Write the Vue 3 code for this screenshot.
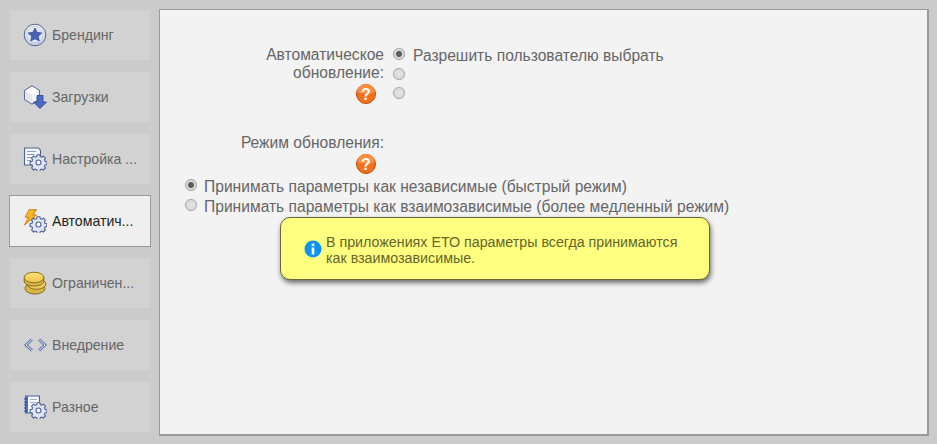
<template>
  <div class="page">
    <nav class="side">
      <button v-for="item in items" :key="item.label" class="tab" :class="{ active: item.active }">
        <svg class="tab-icon" width="24" height="24" viewBox="0 0 24 24">
          <defs>
            <linearGradient id="starBg" x1="0" y1="0" x2="0" y2="1">
              <stop offset="0" stop-color="#f3f5fa" />
              <stop offset="1" stop-color="#c3cbdf" />
            </linearGradient>
            <linearGradient id="coinTop" x1="0" y1="0" x2="0" y2="1">
              <stop offset="0" stop-color="#fbe27a" />
              <stop offset="1" stop-color="#edc24a" />
            </linearGradient>
          </defs>
          <template v-if="item.icon === 'star'">
            <circle cx="12" cy="12" r="10.800" fill="url(#starBg)" stroke="#56678f" stroke-width="1" />
            <circle cx="12" cy="11.500" r="8.200" fill="#e4e8f2" stroke="#b4bed6" stroke-width=".6" />
            <path d="M12 5l2.100 4.300 4.700.7-3.400 3.300.8 4.700-4.200-2.200-4.200 2.200.8-4.700L5.200 10l4.700-.7z" fill="#4a64b4" stroke="#2f4596" stroke-width=".7" />
          </template>
          <template v-else-if="item.icon === 'download'">
            <path d="M1.500 5.500L9 1l7.500 4.500v9L9 19l-7.500-4.500z" fill="#f4f4f6" stroke="#5c6d9f" stroke-width="1.100" />
            <path d="M2 5.800L9 10l7-4.200L9 1.600z" fill="#fff" />
            <path d="M9 10v8.500L2 14.200V5.800z" fill="#e6e6ea" />
            <path d="M14 10.500h6v6.500h3.500L17 23.500 10.500 17H14z" fill="#4a6cc0" stroke="#2c4a9a" stroke-width=".9" />
          </template>
          <template v-else-if="item.icon === 'coins'">
            <ellipse cx="12" cy="17.500" rx="10" ry="5.500" fill="#d9b548" stroke="#8a6d1c" />
            <ellipse cx="13.500" cy="13" rx="9.500" ry="5.300" fill="#e9ca5e" stroke="#8a6d1c" />
            <path d="M1.200 6.500v3.500C1.200 13 5.500 15 11 15s9.800-2 9.800-5V6.500z" fill="#d9b548" stroke="#8a6d1c" />
            <ellipse cx="11" cy="6.500" rx="9.800" ry="5.300" fill="url(#coinTop)" stroke="#8a6d1c" />
          </template>
          <template v-else-if="item.icon === 'code'">
            <path d="M9 6.500L3 12l6 5.500M16 6.500l6 5.500-6 5.500" fill="none" stroke="#5f74ad" stroke-width="2.800" />
            <path d="M9 6.500L3 12l6 5.500M16 6.500l6 5.500-6 5.500" fill="none" stroke="#e6eaf6" stroke-width="1" />
          </template>
          <template v-else>
            <template v-if="item.icon === 'doc'">
              <path d="M1.500 1h14l2 2.500V18h-16z" fill="#f5f6fa" stroke="#4e628f" stroke-width="1.100" />
              <path d="M4 4.500h9M4 7.500h8M4 10.500h5M4 13.500h4" stroke="#8b9ac0" stroke-width="1" />
            </template>
            <template v-else-if="item.icon === 'bolt'">
              <path d="M6 .7h7.500L9.800 6h3.700L1.500 16l4-7.800H2.300z" fill="#f7b91f" stroke="#c8701a" stroke-width=".9" />
            </template>
            <template v-else>
              <path d="M2.500 1h14v17h-14z" fill="#f6f7fb" stroke="#3f5fb0" stroke-width="1.100" />
              <path d="M2.500 1h2.500v17H2.500z" fill="#5674c4" />
              <path d="M1 4h3.500M1 7h3.500M1 10h3.500M1 13h3.500M1 16h3.500" stroke="#2e4c9c" stroke-width="1" />
              <path d="M7 4.500h7M7 7.500h6" stroke="#a3b0d0" stroke-width="1" />
            </template>
            <g transform="translate(15.500 15.500)">
              <path d="M-1.400-7.800h2.800l.4 1.900 1.400.6 1.700-1 2 2-1 1.700.6 1.400 1.900.4v2.800l-1.900.4-.6 1.400 1 1.700-2 2-1.700-1-1.400.6-.4 1.900h-2.800l-.4-1.900-1.400-.6-1.700 1-2-2 1-1.700-.6-1.400-1.900-.4v-2.800l1.900-.4.6-1.400-1-1.700 2-2 1.700 1 1.400-.6z" fill="#dfe4f0" stroke="#4d6294" stroke-width="1.100" />
              <circle r="2.500" fill="#f6f7fb" stroke="#4d6294" stroke-width="1.100" />
            </g>
          </template>
        </svg>
        <span class="tab-label">{{ item.label }}</span>
      </button>
    </nav>

    <main class="panel">
      <section class="auto-row">
        <div class="field-label">
          <div>Автоматическое обновление:</div>
          <svg class="help" width="20" height="20" viewBox="0 0 20 20">
            <circle cx="10" cy="10" r="9.500" fill="#f5701a" stroke="#b8500c" />
            <path d="M1.500 8a8.500 8 0 0 1 17 0c-3 2-14 2-17 0z" fill="#ff8d3e" />
            <text x="10" y="15.500" class="help-mark">?</text>
          </svg>
        </div>
        <div class="auto-options">
          <label v-for="opt in autoOptions" :key="opt.id" class="radio-row">
            <span class="radio" :class="{ on: opt.on }"></span>
            <span class="radio-text">{{ opt.text }}</span>
          </label>
        </div>
      </section>

      <section class="mode">
        <div class="field-label mode-label">
          <div>Режим обновления:</div>
          <svg class="help" width="20" height="20" viewBox="0 0 20 20">
            <circle cx="10" cy="10" r="9.500" fill="#f5701a" stroke="#b8500c" />
            <path d="M1.500 8a8.500 8 0 0 1 17 0c-3 2-14 2-17 0z" fill="#ff8d3e" />
            <text x="10" y="15.500" class="help-mark">?</text>
          </svg>
        </div>
        <label v-for="opt in modeOptions" :key="opt.text" class="radio-row wide">
          <span class="radio" :class="{ on: opt.on }"></span>
          <span class="radio-text">{{ opt.text }}</span>
        </label>
      </section>

      <div class="note">
        <svg class="note-icon" width="18" height="18" viewBox="0 0 18 18">
          <circle cx="9" cy="9" r="8.500" fill="#0c93f5" />
          <rect x="7.700" y="7.500" width="2.600" height="7" fill="#fff" />
          <rect x="7.700" y="3.500" width="2.600" height="2.600" fill="#fff" />
        </svg>
        <p>В приложениях ЕТО параметры всегда принимаются как взаимозависимые.</p>
      </div>
    </main>
  </div>
</template>

<script setup>
const items = [
  { label: "Брендинг", icon: "star" },
  { label: "Загрузки", icon: "download" },
  { label: "Настройка ...", icon: "doc" },
  { label: "Автоматич...", icon: "bolt", active: true },
  { label: "Ограничен...", icon: "coins" },
  { label: "Внедрение", icon: "code" },
  { label: "Разное", icon: "book" },
];
const autoOptions = [
  { id: 1, text: "Разрешить пользователю выбрать", on: true },
  { id: 2, text: "" },
  { id: 3, text: "" },
];
const modeOptions = [
  { text: "Принимать параметры как независимые (быстрый режим)", on: true },
  { text: "Принимать параметры как взаимозависимые (более медленный режим)" },
];
</script>

<style>
html,
body {
  background: #cbcbcb;
}
</style>

<style scoped>
.page {
  display: flex;
  width: 937px;
  height: 444px;
  box-sizing: border-box;
  padding: 9px 8px 8px 9px;
  background: #cbcbcb;
  font-family: "Liberation Sans", Arial, sans-serif;
  color: #666;
  overflow: hidden;
}
.side {
  display: flex;
  flex-direction: column;
  width: 142px;
  margin-right: 8px;
}
.tab {
  flex: none;
  display: flex;
  align-items: center;
  width: 142px;
  height: 52px;
  margin-bottom: 10px;
  padding: 0 0 0 13px;
  box-sizing: border-box;
  border: 1px solid transparent;
  background: #d2d2d2;
  background-clip: padding-box;
  font: inherit;
  font-size: 14.1px;
  color: #666;
  text-align: left;
}
.tab.active {
  border-color: #999;
  background: #efefef;
  color: #222;
}
.tab-icon {
  flex: none;
  margin-right: 5px;
}
.tab-label {
  white-space: nowrap;
}
.panel {
  flex: 1;
  box-sizing: border-box;
  height: 427px;
  padding: 36px 25px 0;
  background: #f3f3f3;
  border: 2px solid #999;
  border-width: 1px 2px 2px 1px;
  font-size: 15.6px;
}
.auto-row {
  display: flex;
}
.field-label {
  width: 199px;
  padding-left: 60px;
  box-sizing: border-box;
  text-align: right;
  line-height: 18px;
}
.help {
  display: block;
  margin: 2px 8px 0 auto;
}
.help-mark {
  fill: #fff;
  font-size: 16px;
  font-weight: 700;
  text-anchor: middle;
  font-family: "Liberation Sans", sans-serif;
}
.auto-options {
  margin-left: 9px;
}
.radio-row {
  display: flex;
  align-items: center;
  height: 19.5px;
  white-space: nowrap;
}
.radio-row.wide {
  height: 20px;
}
.radio {
  flex: none;
  width: 12px;
  height: 12px;
  margin: -3px 8px 0 0;
  box-sizing: border-box;
  border: 1px solid #aaa;
  border-radius: 50%;
  background: radial-gradient(circle, #e4e4e4, #d4d4d4);
  box-shadow: 0 0 1px #bbb;
}
.radio.on {
  background: radial-gradient(circle, #5c5c5c 0 2.500px, #d8d8d8 3.500px);
}
.radio-row.wide .radio-text {
  margin-left: -1px;
}
.radio-text {
  margin-top: 1px;
}
.mode {
  margin-top: 29.5px;
}
.mode-label {
  padding-left: 0;
  margin-bottom: 2px;
}
.note {
  display: flex;
  align-items: flex-start;
  width: 430px;
  height: 63px;
  margin: 1px 0 0 95px;
  padding: 16px 20px 0 23px;
  box-sizing: border-box;
  background: #ffff80;
  border: 1px solid #66663a;
  border-radius: 10px;
  box-shadow: 1px 3px 5px rgba(0, 0, 0, 0.55);
  font-size: 14.26px;
  line-height: 16px;
  color: #66662a;
}
.note-icon {
  flex: none;
  margin: 6px 4px 0 0;
}
.note p {
  margin: 0;
}
</style>
